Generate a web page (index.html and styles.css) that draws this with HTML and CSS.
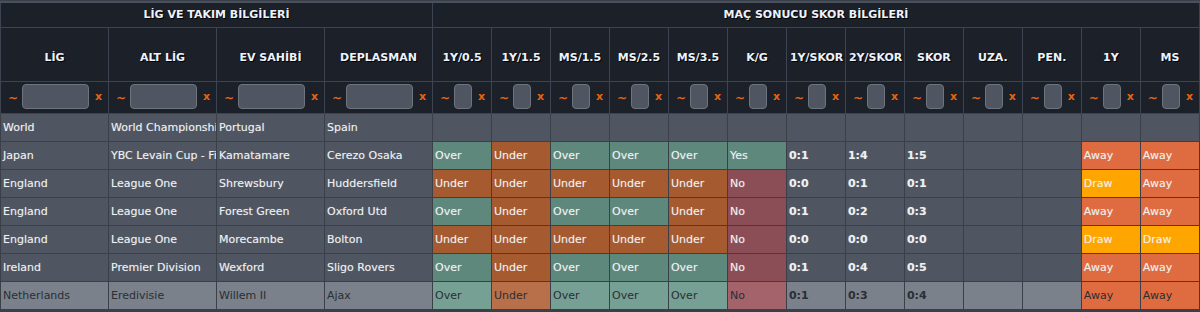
FILE: index.html
```html
<!DOCTYPE html>
<html lang="tr">
<head>
<meta charset="utf-8">
<title>Maç Sonucu</title>
<link rel="stylesheet" href="styles.css">
</head>
<body>
<table class="grid">
  <colgroup>
    <col class="c-wide"><col class="c-wide"><col class="c-wide"><col class="c-wide">
    <col><col><col><col><col><col><col><col><col><col><col><col><col>
  </colgroup>
  <thead>
    <tr class="group-row">
      <th colspan="4">LİG VE TAKIM BİLGİLERİ</th>
      <th colspan="13">MAÇ SONUCU SKOR BİLGİLERİ</th>
    </tr>
    <tr class="head-row">
      <th>LİG</th><th>ALT LİG</th><th>EV SAHİBİ</th><th>DEPLASMAN</th>
      <th>1Y/0.5</th><th>1Y/1.5</th><th>MS/1.5</th><th>MS/2.5</th><th>MS/3.5</th><th>K/G</th>
      <th>1Y/SKOR</th><th>2Y/SKOR</th><th>SKOR</th><th>UZA.</th><th>PEN.</th><th>1Y</th><th>MS</th>
    </tr>
    <tr class="filter-row">
      <th><div class="flt"><span class="tl">~</span><span class="box"></span><span class="cx">x</span></div></th>
      <th><div class="flt"><span class="tl">~</span><span class="box"></span><span class="cx">x</span></div></th>
      <th><div class="flt"><span class="tl">~</span><span class="box"></span><span class="cx">x</span></div></th>
      <th><div class="flt"><span class="tl">~</span><span class="box"></span><span class="cx">x</span></div></th>
      <th><div class="flt"><span class="tl">~</span><span class="box"></span><span class="cx">x</span></div></th>
      <th><div class="flt"><span class="tl">~</span><span class="box"></span><span class="cx">x</span></div></th>
      <th><div class="flt"><span class="tl">~</span><span class="box"></span><span class="cx">x</span></div></th>
      <th><div class="flt"><span class="tl">~</span><span class="box"></span><span class="cx">x</span></div></th>
      <th><div class="flt"><span class="tl">~</span><span class="box"></span><span class="cx">x</span></div></th>
      <th><div class="flt"><span class="tl">~</span><span class="box"></span><span class="cx">x</span></div></th>
      <th><div class="flt"><span class="tl">~</span><span class="box"></span><span class="cx">x</span></div></th>
      <th><div class="flt"><span class="tl">~</span><span class="box"></span><span class="cx">x</span></div></th>
      <th><div class="flt"><span class="tl">~</span><span class="box"></span><span class="cx">x</span></div></th>
      <th><div class="flt"><span class="tl">~</span><span class="box"></span><span class="cx">x</span></div></th>
      <th><div class="flt"><span class="tl">~</span><span class="box"></span><span class="cx">x</span></div></th>
      <th><div class="flt"><span class="tl">~</span><span class="box"></span><span class="cx">x</span></div></th>
      <th><div class="flt"><span class="tl">~</span><span class="box"></span><span class="cx">x</span></div></th>
    </tr>
  </thead>
  <tbody>
    <tr>
      <td>World</td><td>World Championship</td><td>Portugal</td><td>Spain</td>
      <td></td><td></td><td></td><td></td><td></td><td></td>
      <td></td><td></td><td></td><td></td><td></td><td></td><td></td>
    </tr>
    <tr>
      <td>Japan</td><td>YBC Levain Cup - Final</td><td>Kamatamare</td><td>Cerezo Osaka</td>
      <td class="over">Over</td><td class="under">Under</td><td class="over">Over</td><td class="over">Over</td><td class="over">Over</td><td class="over">Yes</td>
      <td class="sc">0:1</td><td class="sc">1:4</td><td class="sc">1:5</td><td></td><td></td><td class="away">Away</td><td class="away">Away</td>
    </tr>
    <tr>
      <td>England</td><td>League One</td><td>Shrewsbury</td><td>Huddersfield</td>
      <td class="under">Under</td><td class="under">Under</td><td class="under">Under</td><td class="under">Under</td><td class="under">Under</td><td class="no">No</td>
      <td class="sc">0:0</td><td class="sc">0:1</td><td class="sc">0:1</td><td></td><td></td><td class="draw">Draw</td><td class="away">Away</td>
    </tr>
    <tr>
      <td>England</td><td>League One</td><td>Forest Green</td><td>Oxford Utd</td>
      <td class="over">Over</td><td class="under">Under</td><td class="over">Over</td><td class="over">Over</td><td class="under">Under</td><td class="no">No</td>
      <td class="sc">0:1</td><td class="sc">0:2</td><td class="sc">0:3</td><td></td><td></td><td class="away">Away</td><td class="away">Away</td>
    </tr>
    <tr>
      <td>England</td><td>League One</td><td>Morecambe</td><td>Bolton</td>
      <td class="under">Under</td><td class="under">Under</td><td class="under">Under</td><td class="under">Under</td><td class="under">Under</td><td class="no">No</td>
      <td class="sc">0:0</td><td class="sc">0:0</td><td class="sc">0:0</td><td></td><td></td><td class="draw">Draw</td><td class="draw">Draw</td>
    </tr>
    <tr>
      <td>Ireland</td><td>Premier Division</td><td>Wexford</td><td>Sligo Rovers</td>
      <td class="over">Over</td><td class="under">Under</td><td class="over">Over</td><td class="over">Over</td><td class="over">Over</td><td class="no">No</td>
      <td class="sc">0:1</td><td class="sc">0:4</td><td class="sc">0:5</td><td></td><td></td><td class="away">Away</td><td class="away">Away</td>
    </tr>
    <tr class="hl">
      <td>Netherlands</td><td>Eredivisie</td><td>Willem II</td><td>Ajax</td>
      <td class="over">Over</td><td class="under">Under</td><td class="over">Over</td><td class="over">Over</td><td class="over">Over</td><td class="no">No</td>
      <td class="sc">0:1</td><td class="sc">0:3</td><td class="sc">0:4</td><td></td><td></td><td class="away">Away</td><td class="away">Away</td>
    </tr>
  </tbody>
</table>
</body>
</html>
```

FILE: styles.css
```css
html, body {
  margin: 0;
  padding: 0;
}
body {
  background: #3a4049;
  padding-top: 1px;
  font-family: "DejaVu Sans", Verdana, sans-serif;
  font-size: 11px;
}
.grid {
  width: 1200px;
  table-layout: fixed;
  border-collapse: collapse;
  border-top: 2px solid #4a515d;
}
.c-wide { width: 108px; }

th {
  background: #1b2029;
  color: #eef3fa;
  font-weight: bold;
  font-size: 11px;
  border: 1px solid #3d4451;
  text-shadow: 1px 1px 0 #000;
  white-space: nowrap;
  overflow: hidden;
  padding: 0 3px;
  text-align: center;
}
.group-row th { height: 23px; padding-bottom: 1px; }
.head-row th { height: 48px; padding-top: 5px; }
.filter-row th { height: 29px; padding: 0 0 2px; }

.flt {
  display: flex;
  align-items: center;
  padding: 0 6px 0 7px;
  gap: 6px;
}
.tl {
  color: #e2661a;
  font-weight: bold;
  font-size: 12px;
  width: 8px;
  text-shadow: none;
  position: relative;
  top: 1px;
}
.cx {
  color: #e8650f;
  font-weight: bold;
  font-size: 11px;
  width: 7px;
  text-shadow: none;
}
.box {
  flex: 1;
  height: 23px;
  background: #4f5661;
  border: 1px solid #6e747d;
  border-radius: 4px;
}

tbody {
  border-top: 1px solid #14181e;
}
td {
  height: 27px;
  padding: 0 2px;
  background: #4f5661;
  color: #eef0f2;
  border: 1px solid #3b4048;
  white-space: nowrap;
  overflow: hidden;
  text-shadow: 0 0 1px rgba(255,255,255,0.35);
}
td.sc { font-weight: bold; }
td.over { background: #5e887c; }
td.under { background: #a55a30; }
td.no { background: #8c4e56; }
td.away { background: #df6b40; }
td.draw { background: #ffa500; }

tr.hl td {
  background: #7a818b;
  color: #2a2e35;
  text-shadow: none;
}
tr.hl td.over { background: #76a093; }
tr.hl td.under { background: #b8704a; }
tr.hl td.no { background: #a4626b; }
tr.hl td.away { background: #df6b40; }
```
